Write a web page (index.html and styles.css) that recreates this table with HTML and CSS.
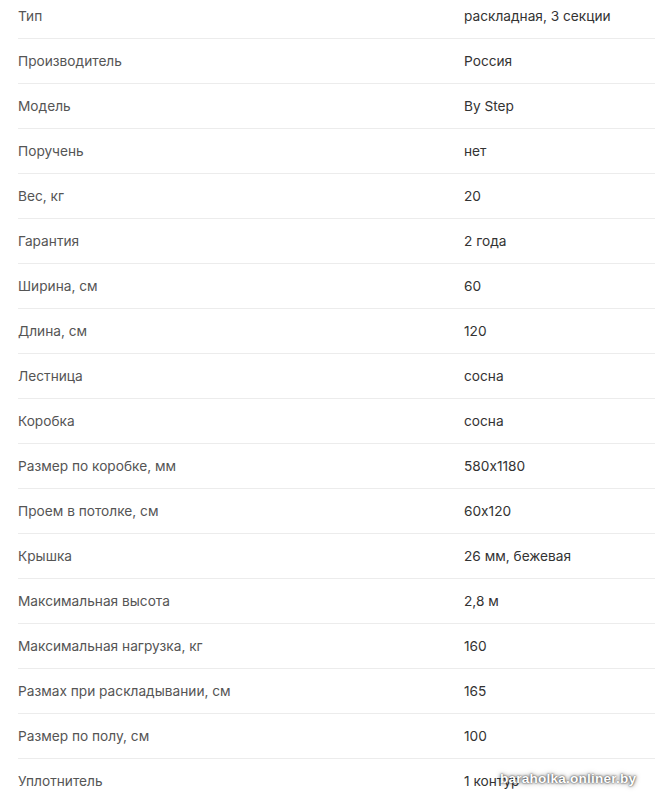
FILE: index.html
```html
<!DOCTYPE html>
<html lang="ru">
<head>
<meta charset="utf-8">
<link rel="stylesheet" href="styles.css">
</head>
<body>
<div class="specs">
  <div class="row"><div class="label">Тип</div><div class="value">раскладная, 3 секции</div></div>
  <div class="row"><div class="label">Производитель</div><div class="value">Россия</div></div>
  <div class="row"><div class="label">Модель</div><div class="value">By Step</div></div>
  <div class="row"><div class="label">Поручень</div><div class="value">нет</div></div>
  <div class="row"><div class="label">Вес, кг</div><div class="value">20</div></div>
  <div class="row"><div class="label">Гарантия</div><div class="value">2 года</div></div>
  <div class="row"><div class="label">Ширина, см</div><div class="value">60</div></div>
  <div class="row"><div class="label">Длина, см</div><div class="value">120</div></div>
  <div class="row"><div class="label">Лестница</div><div class="value">сосна</div></div>
  <div class="row"><div class="label">Коробка</div><div class="value">сосна</div></div>
  <div class="row"><div class="label">Размер по коробке, мм</div><div class="value">580х1180</div></div>
  <div class="row"><div class="label">Проем в потолке, см</div><div class="value">60х120</div></div>
  <div class="row"><div class="label">Крышка</div><div class="value">26 мм, бежевая</div></div>
  <div class="row"><div class="label">Максимальная высота</div><div class="value">2,8 м</div></div>
  <div class="row"><div class="label">Максимальная нагрузка, кг</div><div class="value">160</div></div>
  <div class="row"><div class="label">Размах при раскладывании, см</div><div class="value">165</div></div>
  <div class="row"><div class="label">Размер по полу, см</div><div class="value">100</div></div>
  <div class="row"><div class="label">Уплотнитель</div><div class="value">1 контур</div></div>
</div>
<div class="watermark">baraholka.onliner.by</div>
</body>
</html>
```
FILE: styles.css
```css
html, body {
  margin: 0;
  padding: 0;
  background: #fff;
  overflow: hidden;
}
body {
  width: 655px;
  height: 800px;
  position: relative;
  font-family: Inter, "Noto Sans", sans-serif;
  font-size: 13.7px;
}
.specs {
  margin-top: -6px;
  padding-left: 18px;
}
.row {
  display: flex;
  align-items: center;
  height: 44px;
  border-bottom: 1px solid #ececec;
}
.label {
  width: 446px;
  color: #555;
}
.value {
  color: #333;
}
.watermark {
  position: absolute;
  left: 500px;
  top: 771px;
  font-family: "Liberation Sans", Arial, sans-serif;
  font-weight: bold;
  font-size: 13.6px;
  color: #fff;
  text-shadow: 0 0 2px #222, 0 0 5px rgba(0, 0, 0, 0.6);
  letter-spacing: 0.2px;
}
```
